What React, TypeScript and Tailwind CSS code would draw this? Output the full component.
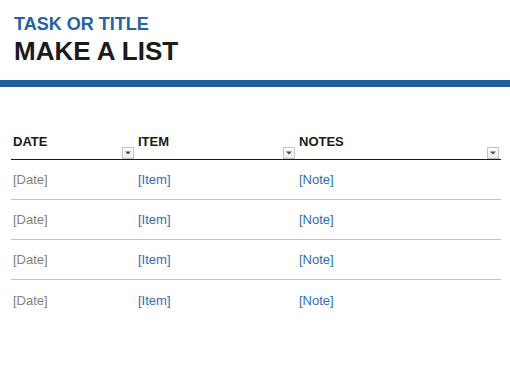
import React from "react"

const rows = [
  { date: "[Date]", item: "[Item]", note: "[Note]" },
  { date: "[Date]", item: "[Item]", note: "[Note]" },
  { date: "[Date]", item: "[Item]", note: "[Note]" },
  { date: "[Date]", item: "[Item]", note: "[Note]" },
]

// small filter button at the bottom-right of each header cell
function FilterButton() {
  return (
    <div className="flex h-[12px] w-[12px] items-center justify-center border border-[#c3c3c3] bg-gradient-to-b from-white to-[#ececec]">
      <svg width="6" height="4" viewBox="0 0 6 4">
        <polygon points="0,0.5 6,0.5 3,3.5" fill="#4a4a4a" />
      </svg>
    </div>
  )
}

function HeaderCell({ label, width }: { label: string; width: string }) {
  return (
    <div className={`flex h-[25px] justify-between pl-[2px] pr-[2px] ${width}`}>
      <span className="text-[13px] leading-[15px] font-bold text-[#1b1b1b]">{label}</span>
      <div className="self-end">
        <FilterButton />
      </div>
    </div>
  )
}

export default function App() {
  return (
    <div
      className="h-[382px] w-[510px] bg-white"
      style={{ fontFamily: '"Liberation Sans", Arial, sans-serif' }}
    >
      {/* Title block */}
      <div className="px-[14px] pt-[14px]">
        <h2 className="text-[18px] leading-[20px] font-bold text-[#2163a3]">TASK OR TITLE</h2>
        <h1 className="mt-[3px] text-[26px] leading-[28px] font-bold text-[#1b1b1b]">MAKE A LIST</h1>
      </div>
      <div className="mt-[15px] h-[7px] w-full bg-[#1e5f9b]" />

      {/* List table */}
      <div className="mt-[47px] ml-[11px] w-[490px]">
        <div className="flex border-b border-[#1b1b1b]">
          <HeaderCell label="DATE" width="w-[125px]" />
          <HeaderCell label="ITEM" width="w-[161px]" />
          <HeaderCell label="NOTES" width="w-[204px]" />
        </div>
        {rows.map((r, i) => (
          <div
            key={i}
            className={`flex h-[40px] items-center text-[13px] leading-[15px] ${
              i < rows.length - 1 ? "border-b border-[#c4c4c4]" : ""
            }`}
          >
            <div className="w-[125px] pl-[2px] text-[#8a817b]">{r.date}</div>
            <div className="w-[161px] pl-[2px] text-[#2e70b2]">{r.item}</div>
            <div className="w-[204px] pl-[2px] text-[#2e70b2]">{r.note}</div>
          </div>
        ))}
      </div>
    </div>
  )
}
